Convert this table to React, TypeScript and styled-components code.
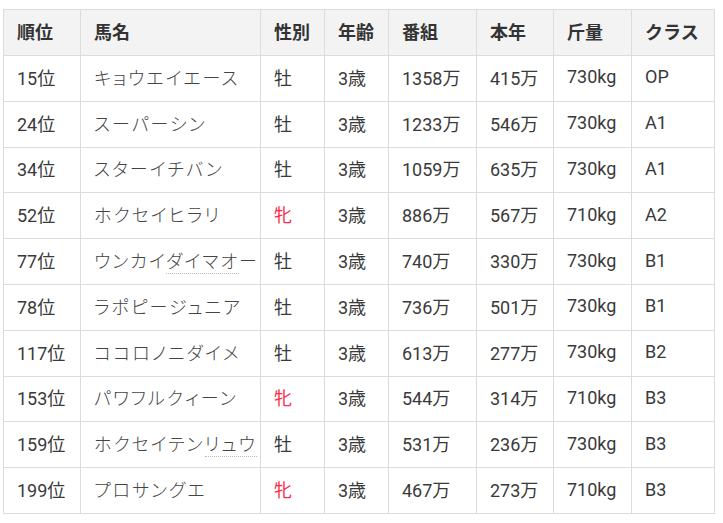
import React from 'react';
import styled, { createGlobalStyle } from 'styled-components';

const GlobalStyle = createGlobalStyle`
  body {
    margin: 0;
    background: #fff;
    font-family: Roboto, "Noto Sans CJK JP", sans-serif;
    color: #333;
  }
`

type Sex = '牡' | '牝'

type HorseType = {
  rank: string
  name: string
  // part of the name shown with a dotted underline
  note?: [number, number]
  sex: Sex
  age: string
  prog: string
  year: string
  weight: string
  cls: string
}

const HORSES: HorseType[] = [
  { rank: '15位', name: 'キョウエイエース', sex: '牡', age: '3歳', prog: '1358万', year: '415万', weight: '730kg', cls: 'OP' },
  { rank: '24位', name: 'スーパーシン', sex: '牡', age: '3歳', prog: '1233万', year: '546万', weight: '730kg', cls: 'A1' },
  { rank: '34位', name: 'スターイチバン', sex: '牡', age: '3歳', prog: '1059万', year: '635万', weight: '730kg', cls: 'A1' },
  { rank: '52位', name: 'ホクセイヒラリ', sex: '牝', age: '3歳', prog: '886万', year: '567万', weight: '710kg', cls: 'A2' },
  { rank: '77位', name: 'ウンカイダイマオー', note: [4, 8], sex: '牡', age: '3歳', prog: '740万', year: '330万', weight: '730kg', cls: 'B1' },
  { rank: '78位', name: 'ラポピージュニア', sex: '牡', age: '3歳', prog: '736万', year: '501万', weight: '730kg', cls: 'B1' },
  { rank: '117位', name: 'ココロノニダイメ', sex: '牡', age: '3歳', prog: '613万', year: '277万', weight: '730kg', cls: 'B2' },
  { rank: '153位', name: 'パワフルクィーン', sex: '牝', age: '3歳', prog: '544万', year: '314万', weight: '710kg', cls: 'B3' },
  { rank: '159位', name: 'ホクセイテンリュウ', note: [6, 9], sex: '牡', age: '3歳', prog: '531万', year: '236万', weight: '730kg', cls: 'B3' },
  { rank: '199位', name: 'プロサングエ', sex: '牝', age: '3歳', prog: '467万', year: '273万', weight: '710kg', cls: 'B3' },
]

const COLS = [
  { title: '順位', width: 77 },
  { title: '馬名', width: 180 },
  { title: '性別', width: 64 },
  { title: '年齢', width: 64 },
  { title: '番組', width: 88 },
  { title: '本年', width: 77 },
  { title: '斤量', width: 78 },
  { title: 'クラス', width: 83 },
]

const Page = styled.div`
  padding: 9px 0 0 3px;
`

const Table = styled.table`
  border-collapse: collapse;
  table-layout: fixed;
  width: 712px;
  font-size: 18px;
`

const Th = styled.th`
  height: 42px;
  padding: 0 13px 3px;
  text-align: left;
  font-weight: 700;
  background: #f3f3f3;
  border: 1px solid #dcdcdc;
  color: #333;
`

const Td = styled.td`
  height: 41.8px;
  padding: 0 13px 3px;
  border: 1px solid #dcdcdc;
  white-space: nowrap;
  color: #3a3a3a;
`

const NameTd = styled(Td)`
  color: #444;
  font-weight: 300;
  font-feature-settings: "palt";
  letter-spacing: 2px;
`

const SexTd = styled(Td)<{ $female: boolean }>`
  color: ${p => p.$female ? '#ff2a4a' : '#3a3a3a'};
`

const Note = styled.span`
  padding-bottom: 1px;
  border-bottom: 1px dotted #bbb;
`

function HorseName({ horse }: { horse: HorseType }) {
  if (!horse.note) return <>{horse.name}</>
  const [from, to] = horse.note
  return <>
    {horse.name.slice(0, from)}
    <Note>{horse.name.slice(from, to)}</Note>
    {horse.name.slice(to)}
  </>
}

export default function App() {
  return <Page>
    <GlobalStyle />
    <Table>
      <colgroup>
        {COLS.map(col => <col key={col.title} style={{ width: col.width }} />)}
      </colgroup>
      <thead>
        <tr>
          {COLS.map(col => <Th key={col.title}>{col.title}</Th>)}
        </tr>
      </thead>
      <tbody>
        {HORSES.map(horse => (
          <tr key={horse.rank}>
            <Td>{horse.rank}</Td>
            <NameTd><HorseName horse={horse} /></NameTd>
            <SexTd $female={horse.sex === '牝'}>{horse.sex}</SexTd>
            <Td>{horse.age}</Td>
            <Td>{horse.prog}</Td>
            <Td>{horse.year}</Td>
            <Td>{horse.weight}</Td>
            <Td>{horse.cls}</Td>
          </tr>
        ))}
      </tbody>
    </Table>
  </Page>
}
